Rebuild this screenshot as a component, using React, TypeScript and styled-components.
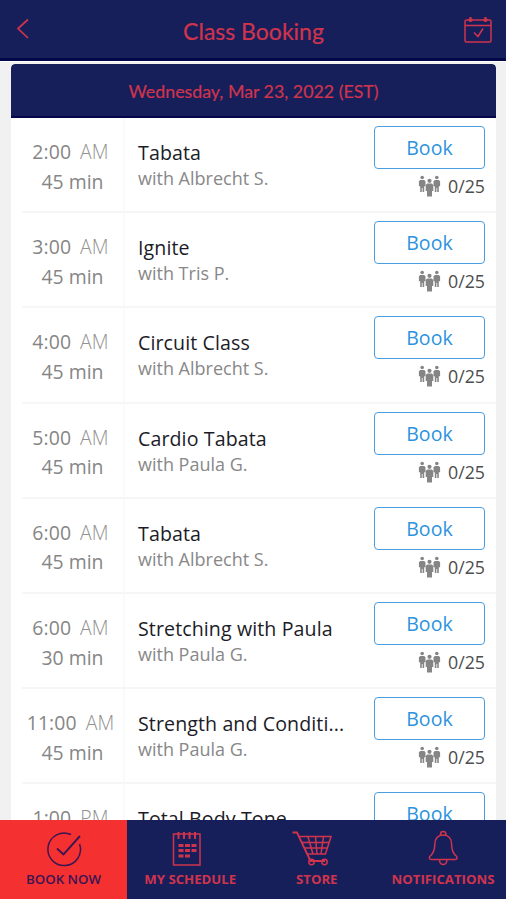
import React from 'react';
import styled, { createGlobalStyle } from 'styled-components';

const NAVY = '#171f5b';
const RED = '#d0344d';

const GlobalStyle = createGlobalStyle`
  * { box-sizing: border-box; }
  body { margin: 0; background: #fff; font-family: 'Open Sans', 'Noto Sans', sans-serif; }
`;

const Screen = styled.div`
  width: 506px;
  height: 900px;
  display: flex;
  flex-direction: column;
  overflow: hidden;
  background: #fff;
`;

const Header = styled.header`
  flex: none;
  height: 61px;
  padding: 0 13px 0 16px;
  display: grid;
  grid-template-columns: 32px 1fr 32px;
  align-items: center;
  background: ${NAVY};
  border-bottom: 3px solid #04074a;
`;

const HeaderIcon = styled.svg<{ $end?: boolean }>`
  display: block;
  justify-self: ${p => (p.$end ? 'end' : 'start')};
  margin-top: ${p => (p.$end ? 2 : 0)}px;
  fill: none;
  stroke: ${RED};
`;

const Title = styled.h1`
  margin: 3px 2px 0 0;
  text-align: center;
  font: 400 23px/32px Lato, sans-serif;
  color: ${RED};
  -webkit-text-stroke: 0.2px ${RED};
`;

const Content = styled.main`
  flex: 1;
  min-height: 0;
  overflow: hidden;
  padding: 2px 10px 0 11px;
  background: #f1f1f1;
  border-top: 1px solid #fff;
`;

const Card = styled.section`
  height: 100%;
  overflow: hidden;
  background: #fff;
  border-radius: 4px 4px 0 0;
`;

const DateBar = styled.h2`
  margin: 0;
  height: 54px;
  padding-top: 1px;
  text-align: center;
  font: 400 17.8px/53px Lato, sans-serif;
  color: ${RED};
  -webkit-text-stroke: 0.2px ${RED};
  background: ${NAVY};
  border-bottom: 2px solid #04074a;
  border-radius: 4px 4px 0 0;
`;

const Row = styled.article`
  height: 95.2px;
  margin-left: 11px;
  padding-right: 11px;
  display: grid;
  grid-template-columns: 103px 1fr 111px;
  border-bottom: 2px solid #f5f6f6;
`;

const Time = styled.div`
  padding-top: 19px;
  padding-right: 4px;
  text-align: center;
  white-space: nowrap;
  font-size: 19.4px;
  line-height: 29.6px;
  color: #868686;
  border-right: 2px solid #f9fafa;
`;

const Clock = styled.div`
  display: flex;
  justify-content: center;
  gap: 9px;
  letter-spacing: 0.1px;
`;

const Meridiem = styled.span`
  font-weight: 300;
  color: #939393;
`;

const Duration = styled.div`
  padding-left: 4px;
`;

const Info = styled.div`
  min-width: 0;
  padding: 21px 0 0 13px;
`;

const ClassName = styled.h3`
  width: 212px;
  margin: 0;
  font-weight: 400;
  font-size: 19.6px;
  line-height: 28px;
  letter-spacing: 0.1px;
  color: #1c1c27;
  white-space: nowrap;
`;

const Teacher = styled.p`
  margin: 0;
  font-size: 18px;
  line-height: 22px;
  color: #888;
  white-space: nowrap;
`;

const Actions = styled.div`
  padding-top: 8px;
`;

const BookButton = styled.button`
  display: block;
  width: 111px;
  height: 43px;
  padding: 1px 0 0;
  font: 400 19.5px/40px 'Open Sans', sans-serif;
  letter-spacing: 0.1px;
  color: #2c93de;
  background: #fff;
  border: 1.5px solid #4a9ee0;
  border-radius: 4px;
`;

const Spots = styled.div`
  display: flex;
  justify-content: flex-end;
  gap: 7px;
  padding-top: 6px;
  font-size: 17.8px;
  line-height: 23px;
  color: #4d4d4d;
`;

const PeopleSvg = styled.svg`
  display: block;
  fill: #858585;
`;

const Nav = styled.nav`
  flex: none;
  height: 79px;
  margin-bottom: 1px;
  display: grid;
  grid-template-columns: 127px 126.5px 126.5px 126px;
  background: ${NAVY};
`;

const NavItem = styled.a<{ $active?: boolean }>`
  display: flex;
  flex-direction: column;
  align-items: center;
  padding-top: 9px;
  color: ${p => (p.$active ? '#3b1653' : RED)};
  background: ${p => (p.$active ? '#f53031' : 'transparent')};
  font-weight: ${p => (p.$active ? 600 : 700)};
  font-size: ${p => (p.$active ? 13.3 : 13.2)}px;
  line-height: 20px;
  white-space: nowrap;
`;

const NavIcon = styled.svg`
  display: block;
  margin-bottom: 1px;
  fill: none;
  stroke: currentColor;
  stroke-width: 1.5;
`;

function People() {
  return (
    <PeopleSvg width="23" height="23" viewBox="0 0 23 23">
      <circle cx="4.2" cy="2.5" r="1.8" />
      <path d="M2.2 5h4l1.3 1.3v5H6.2V17H4.6v-4h-.8v4H2.2v-5.7H.9v-5z" />
      <circle cx="18.8" cy="2.5" r="1.8" />
      <path d="M16.800 5h4l1.300 1.300v5h-1.300V17h-1.600v-4h-.8v4h-1.600v-5.700h-1.300v-5z" />
      <circle cx="11.500" cy="5.800" r="2.100" />
      <path d="M9.200 8.500h4.600l1.500 1.500v6H14v5.500H9V16H7.700v-6z" />
    </PeopleSvg>
  );
}

const classes = [
  ['2:00', 'AM', '45 min', 'Tabata', 'with Albrecht S.'],
  ['3:00', 'AM', '45 min', 'Ignite', 'with Tris P.'],
  ['4:00', 'AM', '45 min', 'Circuit Class', 'with Albrecht S.'],
  ['5:00', 'AM', '45 min', 'Cardio Tabata', 'with Paula G.'],
  ['6:00', 'AM', '45 min', 'Tabata', 'with Albrecht S.'],
  ['6:00', 'AM', '30 min', 'Stretching with Paula', 'with Paula G.'],
  ['11:00', 'AM', '45 min', 'Strength and Conditi...', 'with Paula G.'],
  ['1:00', 'PM', '45 min', 'Total Body Tone', 'with Paula G.'],
];

export default function App() {
  return (
    <>
      <GlobalStyle />
      <Screen>
        <Header>
          <HeaderIcon width="14" height="22" viewBox="0 0 14 22" strokeWidth="1.7">
            <path d="M12 1.5 2 10.5 12 20" />
          </HeaderIcon>
          <Title>Class Booking</Title>
          <HeaderIcon $end width="30" height="28" viewBox="0 0 30 28" strokeWidth="1.5">
            <rect x="2" y="4" width="26" height="22" rx="1.5" />
            <path d="M2 9.5h26M11 16.5l4 4 5-8" />
            <path d="M7.5 1v5M22.5 1v5" strokeWidth="2.2" />
            <path d="M5.5 4h4M20.5 4h4" strokeWidth="2.4" />
          </HeaderIcon>
        </Header>
        <Content>
          <Card>
            <DateBar>Wednesday, Mar 23, 2022 (EST)</DateBar>
            {classes.map(([time, half, length, name, teacher], i) => (
              <Row key={i}>
                <Time>
                  <Clock>
                    <span>{time}</span>
                    <Meridiem>{half}</Meridiem>
                  </Clock>
                  <Duration>{length}</Duration>
                </Time>
                <Info>
                  <ClassName>{name}</ClassName>
                  <Teacher>{teacher}</Teacher>
                </Info>
                <Actions>
                  <BookButton>Book</BookButton>
                  <Spots>
                    <People />
                    0/25
                  </Spots>
                </Actions>
              </Row>
            ))}
          </Card>
        </Content>
        <Nav>
          <NavItem $active>
            <NavIcon width="40" height="39" viewBox="0 0 40 39">
              <path d="M27 5.500A16.300 16.300 0 1 0 35.600 15" />
              <path d="M13 19.500l6.500 6L36 7" strokeWidth="1.9" />
            </NavIcon>
            BOOK NOW
          </NavItem>
          <NavItem>
            <NavIcon width="40" height="39" viewBox="0 0 40 39">
              <rect x="3.500" y="5" width="26.500" height="31" />
              <path d="M8.500 3v7M14 3v7M19.600 3v7M25 3v7" strokeWidth="2" />
              <path d="M8.500 16.500h18M8.500 21.500h18M8.500 27h11.500" strokeWidth="2.8" strokeDasharray="5 1.5" />
            </NavIcon>
            MY SCHEDULE
          </NavItem>
          <NavItem>
            <NavIcon width="50" height="39" viewBox="3 0 50 39">
              <path d="M3.500 3.500H8L21.500 32h14.500" strokeWidth="1.8" />
              <path d="M10.500 7.500h31.500L36.500 25H18.500M13 13.500h27M15.500 19h23M19 8l5 17M26.500 8l1.500 17M34.500 8l-2.500 17" />
              <circle cx="22.500" cy="33" r="2.700" />
              <circle cx="35.500" cy="33" r="2.700" />
            </NavIcon>
            STORE
          </NavItem>
          <NavItem>
            <NavIcon width="40" height="39" viewBox="0 0 40 39">
              <path d="M17.500 6V5.200a2.700 2.700 0 0 1 5.400 0V6M20.200 6c-5.200 0-8.400 3.500-8.400 9.300 0 6.700-1.500 9.500-5.100 12.200-.8 2.300 0 3 2 3h23c2 0 2.800-.7 2-3-3.600-2.700-5.100-5.500-5.100-12.200 0-5.800-3.200-9.300-8.400-9.300zM16.700 30.500v1.500a3.500 3.500 0 0 0 7 0v-1.500" />
            </NavIcon>
            NOTIFICATIONS
          </NavItem>
        </Nav>
      </Screen>
    </>
  );
}
